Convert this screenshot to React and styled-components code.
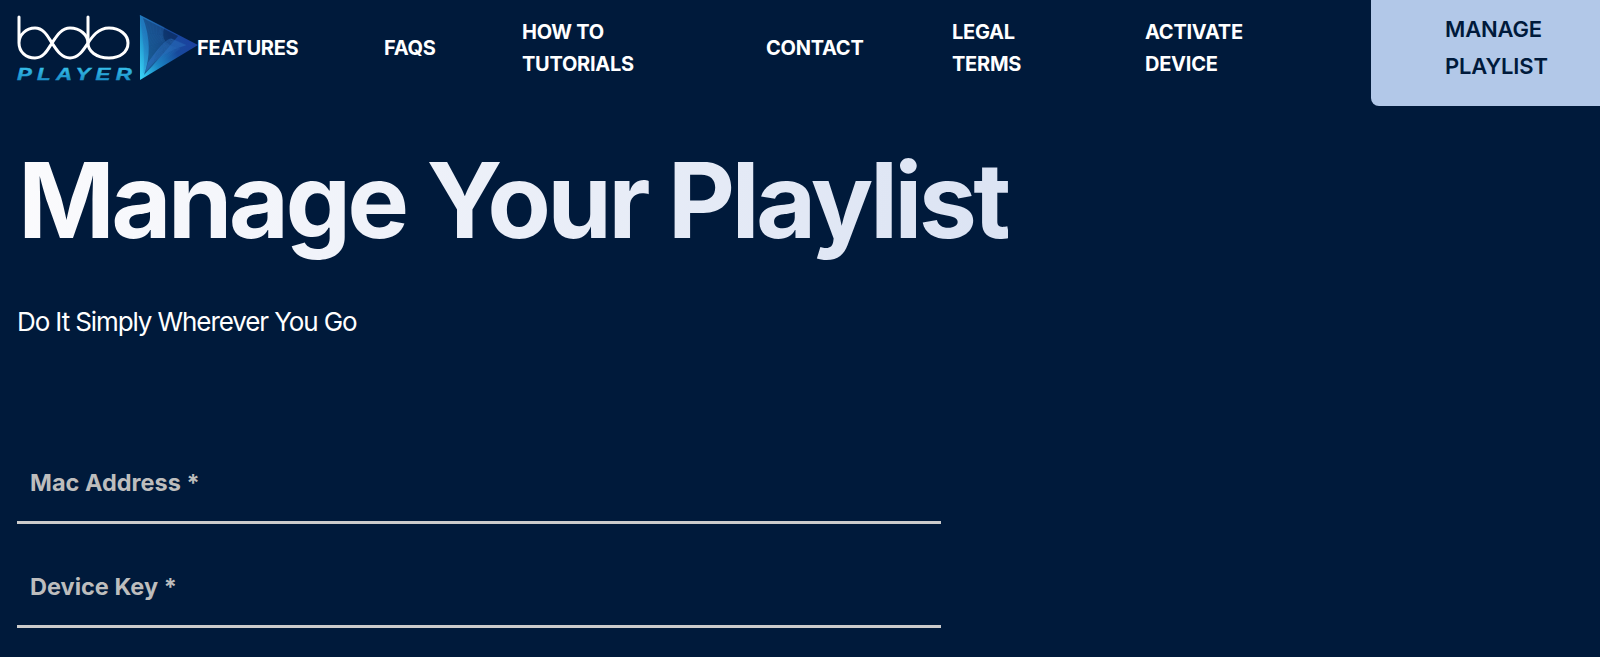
import React from "react";
import styled, { createGlobalStyle } from "styled-components";

const navItems = [
  ["FEATURES"],
  ["FAQS"],
  ["HOW TO", "TUTORIALS"],
  ["CONTACT"],
  ["LEGAL", "TERMS"],
  ["ACTIVATE", "DEVICE"],
];

const fanLines = Array.from({ length: 30 }, (_, i) => i / 29);

const Logo = () => (
  <LogoMark viewBox="0 0 184 68" aria-label="bdb player">
    <defs>
      <linearGradient id="playerText" x1="0" y1="0" x2="0" y2="1">
        <stop offset="0" stopColor="#3cc8f0" />
        <stop offset="1" stopColor="#1280bd" />
      </linearGradient>
      <linearGradient id="playFill" x1="0" y1="0.9" x2="1" y2="0.45">
        <stop offset="0" stopColor="#38d0f4" />
        <stop offset="0.3" stopColor="#1b86c4" />
        <stop offset="0.65" stopColor="#174a9c" />
        <stop offset="1" stopColor="#1c3fa0" />
      </linearGradient>
    </defs>
    <g fill="none" stroke="#fff" strokeWidth="3" strokeLinecap="round">
      <path d="M3 2V28C3 37 10 43 19 43C28 43 32 34 36 28C40 22 45 13 54 13C64 13 72 20 72 28C72 36 80 43 93 43C104 43 112 37 112 28C112 20 104 13 93 13C82 13 76 22 72 28C68 34 63 43 54 43C45 43 40 34 36 28C32 22 28 13 19 13C10 13 3 20 3 28" />
      <path d="M72 2V28" />
    </g>
    <PlayerWord x="1" y="65" textLength="120" lengthAdjust="spacingAndGlyphs" fill="url(#playerText)" stroke="url(#playerText)">
      PLAYER
    </PlayerWord>
    <path d="M124 0L182 30L124 65Z" fill="url(#playFill)" />
    <path d="M127 3L162 21Q150 36 128 60Q138 32 127 3Z" fill="#08244f" opacity="0.62" />
    <g fill="none" strokeWidth="0.5">
      {fanLines.map((t) => (
        <path key={t} stroke="#2a6fb8" opacity="0.65" d={`M${124 + t * 24} ${t * 12}Q${130 + t * 12} ${36 - t * 6} ${128 + t * 36} ${58 - t * 24}`} />
      ))}
      {fanLines.map((t) => (
        <path key={t} stroke="#2a6fb8" opacity="0.55" d={`M${130 + t * 2} ${56 - t * 8}Q${146 + t * 4} ${36 - t * 14} ${170 - t * 14} ${30 - t * 6}`} />
      ))}
    </g>
  </LogoMark>
);

export default function App() {
  return (
    <Page>
      <GlobalStyle />
      <Header>
        <LogoLink href="#">
          <Logo />
        </LogoLink>
        <Nav>
          {navItems.map((lines) => (
            <NavLink href="#" key={lines[0]}>
              {lines.map((line) => (
                <span key={line}>{line}</span>
              ))}
            </NavLink>
          ))}
        </Nav>
        <ManageButton href="#">
          <span>MANAGE</span>
          <span>PLAYLIST</span>
        </ManageButton>
      </Header>
      <Main>
        <Title>Manage Your Playlist</Title>
        <Subtitle>Do It Simply Wherever You Go</Subtitle>
        <Form>
          <Field placeholder="Mac Address *" />
          <Field placeholder="Device Key *" />
        </Form>
      </Main>
    </Page>
  );
}

const GlobalStyle = createGlobalStyle`
  html, body {
    margin: 0;
    padding: 0;
    background: #001a3b;
  }
  * {
    box-sizing: border-box;
  }
`;

const Page = styled.div`
  height: 657px;
  overflow: hidden;
  background: #001a3b;
  font-family: Inter, "Liberation Sans", sans-serif;
  color: #fff;
`;

const Header = styled.header`
  display: flex;
  height: 106px;
  padding-left: 16px;
`;

const LogoLink = styled.a`
  display: block;
  width: 181px;
  padding-top: 15px;
`;

const LogoMark = styled.svg`
  display: block;
  width: 184px;
  height: 68px;
`;

const PlayerWord = styled.text`
  font-family: "Liberation Sans", sans-serif;
  font-size: 17px;
  font-style: italic;
  font-weight: 700;
  letter-spacing: 4px;
  stroke-width: 0.4px;
`;

const Nav = styled.nav`
  display: grid;
  flex: 1;
  grid-template-columns: 187px 138px 244px 186px 193px 226px;
  align-items: center;
  height: 95px;
`;

const NavLink = styled.a`
  display: flex;
  flex-direction: column;
  color: #fff;
  font-size: 20px;
  font-weight: 700;
  line-height: 32px;
  letter-spacing: -0.25px;
  text-decoration: none;
`;

const ManageButton = styled.a`
  display: flex;
  flex-direction: column;
  justify-content: center;
  width: 229px;
  height: 106px;
  padding: 0 0 10px 74px;
  border-radius: 0 0 0 8px;
  background: #b2c8e8;
  color: #001a3b;
  font-size: 22px;
  font-weight: 600;
  line-height: 37px;
  letter-spacing: -0.15px;
  text-decoration: none;
`;

const Main = styled.main`
  padding: 0 17px;
`;

const Title = styled.h1`
  width: max-content;
  margin: 31px 0 0 1px;
  background: linear-gradient(100deg, #fbfbfd 0%, #dbe3f3 100%);
  -webkit-background-clip: text;
  background-clip: text;
  color: transparent;
  font-size: 104px;
  font-weight: 700;
  line-height: 126px;
  letter-spacing: -3.75px;
`;

const Subtitle = styled.p`
  margin: 43px 0 0;
  font-size: 26px;
  font-weight: 400;
  line-height: 32px;
  letter-spacing: -1.1px;
`;

const Form = styled.form`
  display: flex;
  flex-direction: column;
  width: 924px;
  margin-top: 102px;
`;

const Field = styled.input`
  display: block;
  width: 100%;
  height: 104px;
  padding: 24px 13px 0;
  border: 0;
  border-bottom: 3px solid #cbcbcb;
  background: transparent;
  color: #fff;
  font-family: inherit;
  font-size: 23.5px;
  font-weight: 700;
  outline: none;

  &:first-child {
    height: 84px;
    padding-top: 4px;
  }

  &::placeholder {
    color: #bdbdbd;
    opacity: 1;
  }
`;
